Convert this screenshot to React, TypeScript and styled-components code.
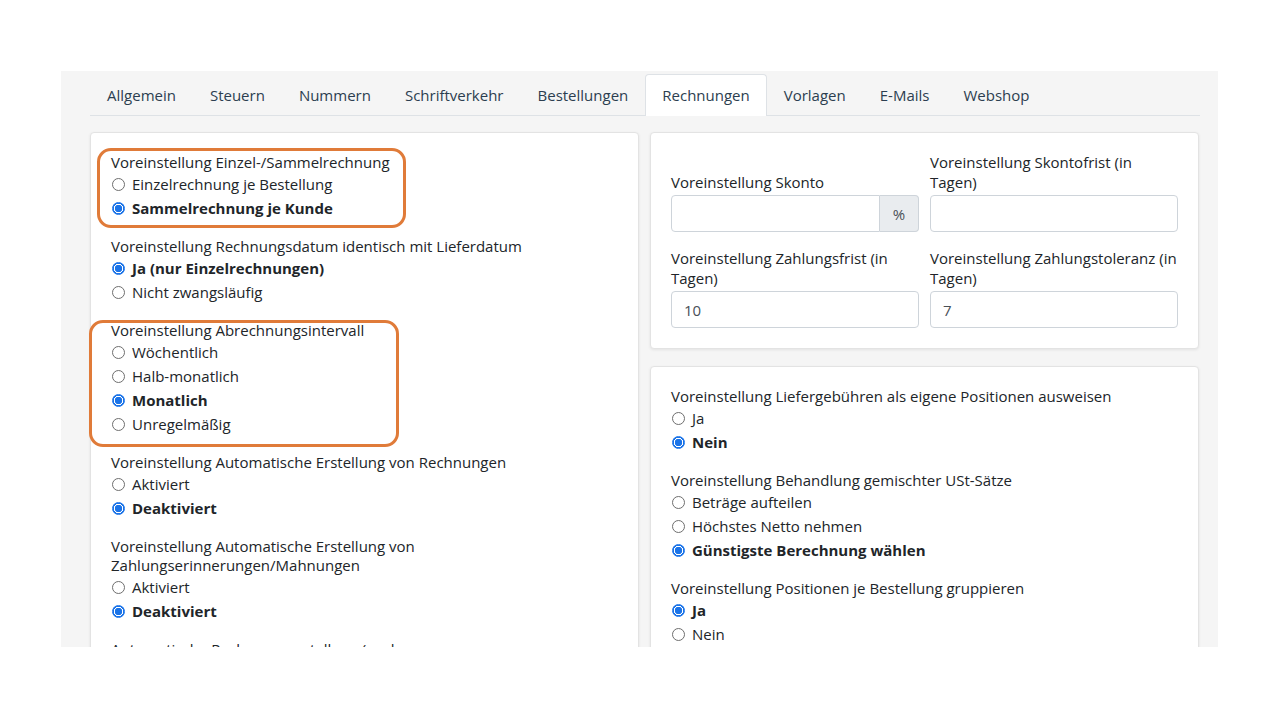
import React from 'react'
import styled, {createGlobalStyle} from 'styled-components'

const GlobalStyle = createGlobalStyle`
  body {
    margin: 0;
    background: #ffffff;
    font-family: "Open Sans", "Noto Sans", Arial, sans-serif;
    color: #212529;
  }
`

const tabs = ['Allgemein', 'Steuern', 'Nummern', 'Schriftverkehr', 'Bestellungen', 'Rechnungen', 'Vorlagen', 'E-Mails', 'Webshop']

type Option = { label: string, checked?: boolean }
type Group = { title: string, options: Option[] }

const leftGroups: Group[] = [
    {title: 'Voreinstellung Einzel-/Sammelrechnung', options: [{label: 'Einzelrechnung je Bestellung'}, {label: 'Sammelrechnung je Kunde', checked: true}]},
    {title: 'Voreinstellung Rechnungsdatum identisch mit Lieferdatum', options: [{label: 'Ja (nur Einzelrechnungen)', checked: true}, {label: 'Nicht zwangsläufig'}]},
    {title: 'Voreinstellung Abrechnungsintervall', options: [{label: 'Wöchentlich'}, {label: 'Halb-monatlich'}, {label: 'Monatlich', checked: true}, {label: 'Unregelmäßig'}]},
    {title: 'Voreinstellung Automatische Erstellung von Rechnungen', options: [{label: 'Aktiviert'}, {label: 'Deaktiviert', checked: true}]},
    {title: 'Voreinstellung Automatische Erstellung von Zahlungserinnerungen/Mahnungen', options: [{label: 'Aktiviert'}, {label: 'Deaktiviert', checked: true}]},
    {title: 'Automatische Rechnungserstellung (auch', options: []},
]

const rightGroups: Group[] = [
    {title: 'Voreinstellung Liefergebühren als eigene Positionen ausweisen', options: [{label: 'Ja'}, {label: 'Nein', checked: true}]},
    {title: 'Voreinstellung Behandlung gemischter USt-Sätze', options: [{label: 'Beträge aufteilen'}, {label: 'Höchstes Netto nehmen'}, {label: 'Günstigste Berechnung wählen', checked: true}]},
    {title: 'Voreinstellung Positionen je Bestellung gruppieren', options: [{label: 'Ja', checked: true}, {label: 'Nein'}]},
]

const RadioGroup = ({group}: { group: Group }) => (
    <GroupBox>
        <GroupTitle>{group.title}</GroupTitle>
        {group.options.map(o => (
            <RadioRow key={o.label} checked={!!o.checked}>
                <RadioDot checked={!!o.checked}/>
                {o.label}
            </RadioRow>
        ))}
    </GroupBox>
)

export default function App() {
    return (
        <>
            <GlobalStyle/>
            <Page>
                <TabBar>
                    {tabs.map(t => <Tab key={t} active={t === 'Rechnungen'}>{t}</Tab>)}
                </TabBar>
                <Columns>
                    <Card padTop={20}>
                        <Highlight top={15} left={6} width={309} height={80}/>
                        <Highlight top={187} left={-2} width={310} height={127}/>
                        {leftGroups.map(g => <RadioGroup key={g.title} group={g}/>)}
                    </Card>
                    <RightColumn>
                        <Card padTop={19}>
                            <FieldGrid>
                                <Field>
                                    <FieldLabel>Voreinstellung Skonto</FieldLabel>
                                    <InputGroup>
                                        <TextInput defaultValue=""/>
                                        <Addon>%</Addon>
                                    </InputGroup>
                                </Field>
                                <Field>
                                    <FieldLabel>Voreinstellung Skontofrist (in Tagen)</FieldLabel>
                                    <TextInput defaultValue=""/>
                                </Field>
                                <Field>
                                    <FieldLabel>Voreinstellung Zahlungsfrist (in Tagen)</FieldLabel>
                                    <TextInput defaultValue="10"/>
                                </Field>
                                <Field>
                                    <FieldLabel>Voreinstellung Zahlungstoleranz (in Tagen)</FieldLabel>
                                    <TextInput defaultValue="7"/>
                                </Field>
                            </FieldGrid>
                        </Card>
                        <Card padTop={20}>
                            {rightGroups.map(g => <RadioGroup key={g.title} group={g}/>)}
                        </Card>
                    </RightColumn>
                </Columns>
            </Page>
        </>
    )
}

const Page = styled.div`
  margin: 71px 0 0 61px;
  width: 1157px;
  height: 576px;
  box-sizing: border-box;
  padding: 3px 19px 0 29px;
  background: #f5f5f5;
  overflow: hidden;
`

const TabBar = styled.div`
  display: flex;
  border-bottom: 1px solid #dee2e6;
  height: 41px;
  margin-right: -1px;
`

const Tab = styled.div<{ active: boolean }>`
  display: flex;
  align-items: center;
  padding: 0 16px;
  font-size: 15px;
  color: #2c3e50;
  border: 1px solid ${({active}) => active ? '#dee2e6' : 'transparent'};
  border-bottom: none;
  border-radius: 4px 4px 0 0;
  background: ${({active}) => active ? '#ffffff' : 'transparent'};
  margin-bottom: -1px;
  height: 42px;
  box-sizing: border-box;
  padding-bottom: 2px;
`

const Columns = styled.div`
  display: grid;
  grid-template-columns: 549px 549px;
  gap: 11px;
  margin-top: 16px;
  align-items: start;
`

const RightColumn = styled.div`
  display: flex;
  flex-direction: column;
  gap: 17px;
`

const Card = styled.div<{ padTop: number }>`
  position: relative;
  background: #ffffff;
  border: 1px solid #e3e3e3;
  border-radius: 4px;
  box-shadow: 0 1px 3px rgba(0, 0, 0, 0.08);
  padding: ${({padTop}) => padTop}px 20px 20px;
  font-size: 15px;
`

const Highlight = styled.div<{ top: number, left: number, width: number, height: number }>`
  position: absolute;
  top: ${({top}) => top}px;
  left: ${({left}) => left}px;
  width: ${({width}) => width}px;
  height: ${({height}) => height}px;
  box-sizing: border-box;
  border: 3px solid #e07b39;
  border-radius: 14px;
  pointer-events: none;
`

const GroupBox = styled.div`
  margin-bottom: 17px;
`

const GroupTitle = styled.div`
  line-height: 19px;
`

const RadioRow = styled.div<{ checked: boolean }>`
  display: flex;
  align-items: center;
  height: 24px;
  font-weight: ${({checked}) => checked ? 700 : 400};
`

const RadioDot = styled.span<{ checked: boolean }>`
  width: 13px;
  height: 13px;
  box-sizing: border-box;
  border-radius: 50%;
  margin: 0 7px 0 1px;
  flex: none;
  border: 1px solid ${({checked}) => checked ? '#1a73e8' : '#6e6e6e'};
  background: ${({checked}) => checked
          ? 'radial-gradient(circle, #1a73e8 0 3.5px, #ffffff 4px 4.5px, #1a73e8 5px)'
          : '#ffffff'};
`

const FieldGrid = styled.div`
  display: grid;
  grid-template-columns: 1fr 1fr;
  column-gap: 11px;
  row-gap: 16px;
`

const Field = styled.div`
  display: flex;
  flex-direction: column;
  justify-content: flex-end;
`

const FieldLabel = styled.div`
  line-height: 20px;
  margin-bottom: 3px;
`

const InputGroup = styled.div`
  display: flex;

  input {
    border-top-right-radius: 0;
    border-bottom-right-radius: 0;
    flex: 1;
    min-width: 0;
  }
`

const TextInput = styled.input`
  height: 37px;
  box-sizing: border-box;
  border: 1px solid #ced4da;
  border-radius: 4px;
  padding: 0 12px;
  font-family: inherit;
  font-size: 15px;
  color: #495057;
  background: #ffffff;
  width: 100%;
`

const Addon = styled.div`
  width: 39px;
  flex: none;
  display: flex;
  align-items: center;
  justify-content: center;
  background: #e9ecef;
  border: 1px solid #ced4da;
  border-left: none;
  border-radius: 0 4px 4px 0;
  color: #495057;
  box-sizing: border-box;
`
